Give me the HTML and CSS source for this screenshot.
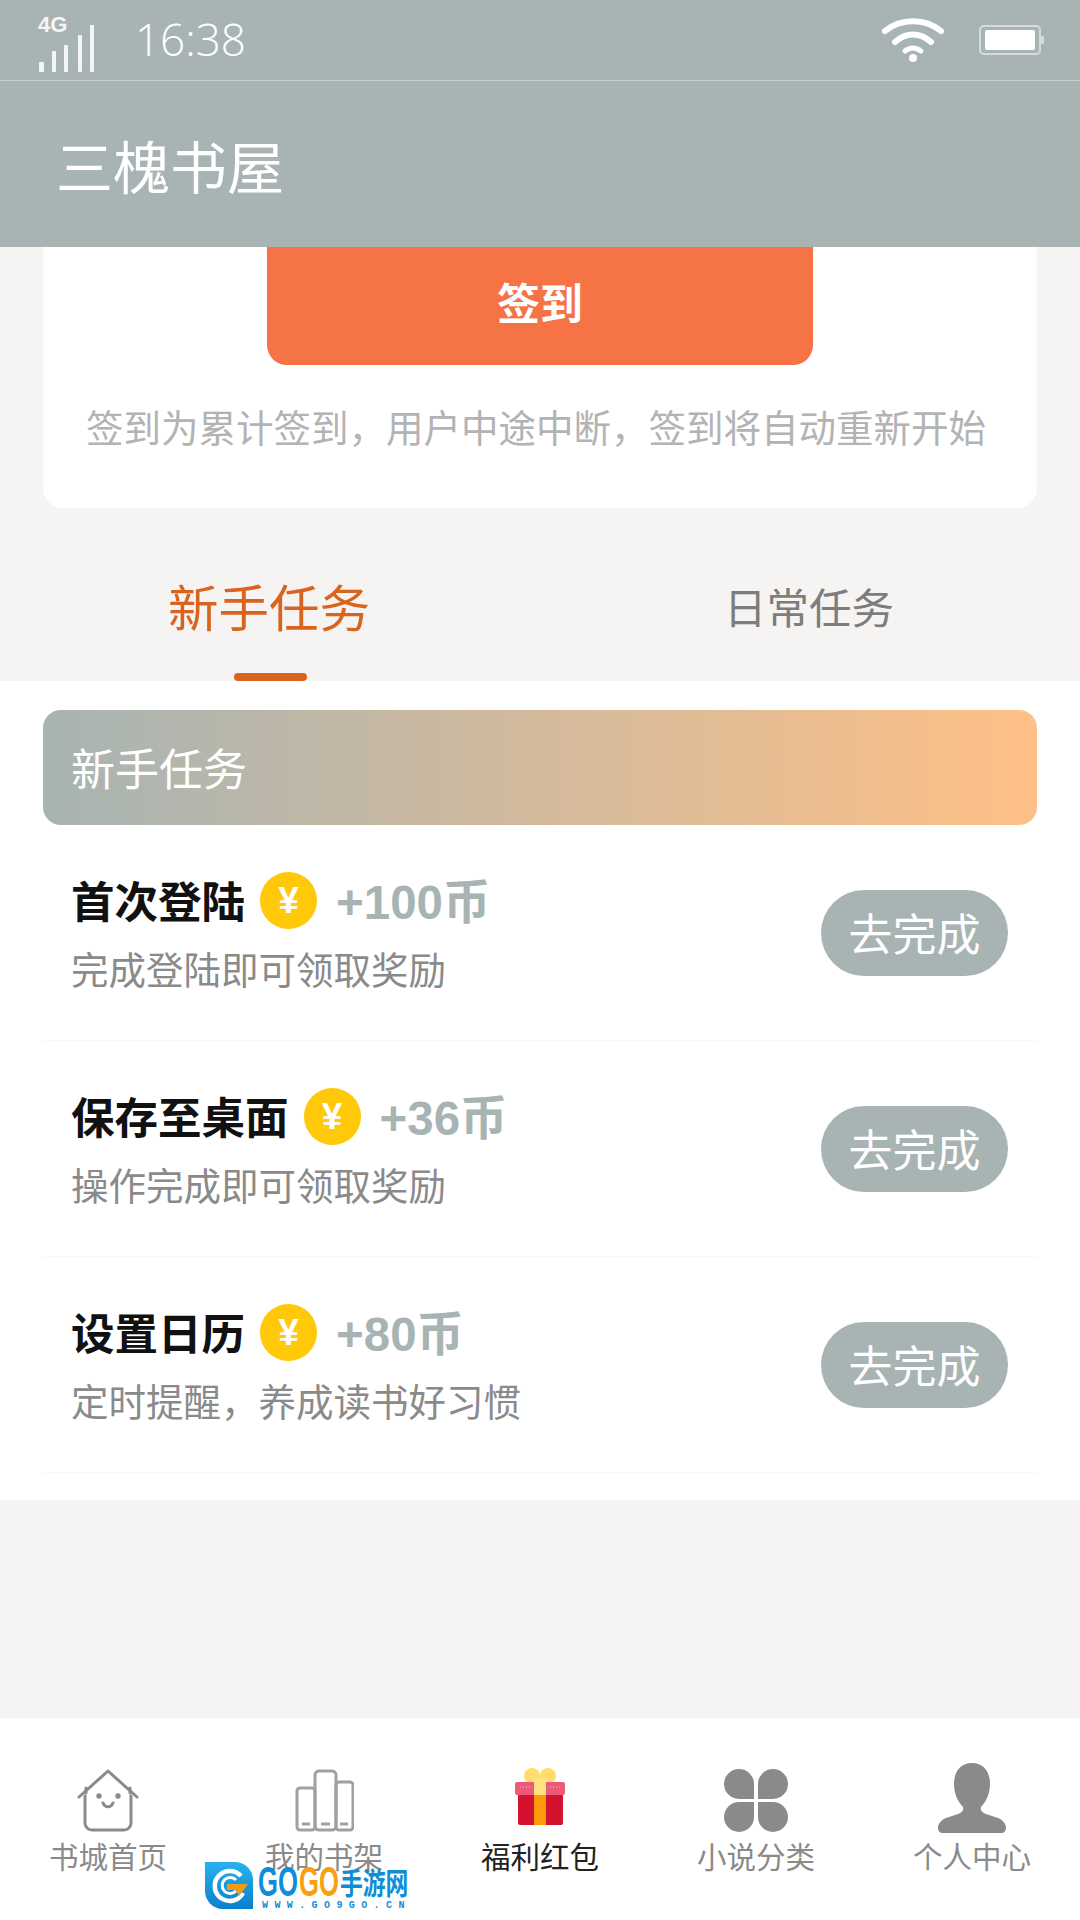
FILE: index.html
```html
<!DOCTYPE html>
<html lang="zh-CN">
<head>
  <meta charset="UTF-8">
  <title>三槐书屋</title>
  <link rel="stylesheet" href="styles.css">
</head>
<body>
  <div class="top">
    <div class="status">
      <div class="signal">
        <span class="net">4G</span>
        <svg class="bars" width="58" height="47" viewBox="0 0 58 47" fill="#f4f6f6">
          <rect x="2" y="37" width="5" height="10" rx="1"/>
          <rect x="15" y="26" width="4" height="21" rx="1"/>
          <rect x="27" y="20" width="4" height="27" rx="1"/>
          <rect x="41" y="10" width="4" height="37" rx="1"/>
          <rect x="53" y="0" width="4" height="47" rx="1"/>
        </svg>
      </div>
      <span class="time">16:38</span>
      <div class="status-right">
        <svg width="64" height="46" viewBox="0 0 64 46" fill="none" stroke="#fff" stroke-linecap="round">
          <path d="M4 14C20 1 44 1 60 14" stroke-width="6"/>
          <path d="M14 25C25 15 39 15 50 25" stroke-width="6"/>
          <path d="M24 34C29 30 35 30 40 34" stroke-width="5"/>
          <circle cx="32" cy="41" r="4" fill="#fff" stroke="none"/>
        </svg>
        <svg width="66" height="30" viewBox="0 0 66 30">
          <rect x="1" y="1" width="60" height="28" rx="4" fill="none" stroke="#d5dddc" stroke-width="2"/>
          <rect x="6" y="5" width="50" height="20" rx="2" fill="#fff"/>
          <rect x="62" y="11" width="3" height="8" rx="1" fill="#d5dddc"/>
        </svg>
      </div>
    </div>
    <div class="title">三槐书屋</div>
  </div>

  <div class="sign-card">
    <button class="sign-btn">签到</button>
    <p class="sign-note">签到为累计签到，用户中途中断，签到将自动重新开始</p>
  </div>

  <div class="tabs">
    <div class="tab active">新手任务</div>
    <div class="tab">日常任务</div>
  </div>

  <div class="panel">
    <div class="banner">新手任务</div>

    <div class="task">
      <div class="task-info">
        <div class="task-head">
          <span class="task-name">首次登陆</span>
          <span class="coin">¥</span>
          <span class="reward">+100币</span>
        </div>
        <div class="task-desc">完成登陆即可领取奖励</div>
      </div>
      <button class="go-btn">去完成</button>
    </div>

    <div class="task">
      <div class="task-info">
        <div class="task-head">
          <span class="task-name">保存至桌面</span>
          <span class="coin">¥</span>
          <span class="reward">+36币</span>
        </div>
        <div class="task-desc">操作完成即可领取奖励</div>
      </div>
      <button class="go-btn">去完成</button>
    </div>

    <div class="task">
      <div class="task-info">
        <div class="task-head">
          <span class="task-name">设置日历</span>
          <span class="coin">¥</span>
          <span class="reward">+80币</span>
        </div>
        <div class="task-desc">定时提醒，养成读书好习惯</div>
      </div>
      <button class="go-btn">去完成</button>
    </div>
  </div>

  <div class="spacer"></div>

  <div class="nav">
    <div class="nav-item">
      <svg width="64" height="66" viewBox="0 0 64 66" fill="none" stroke="#8a8a8a" stroke-width="3" stroke-linejoin="round" stroke-linecap="round">
        <path d="M3 31 32 5l29 26"/>
        <path d="M9 30v27a7 7 0 0 0 7 7h32a7 7 0 0 0 7-7V30"/>
        <path d="M10 22v5M54 22v5"/>
        <path d="M27 37c2 5 8 5 10 0"/>
        <circle cx="23" cy="30" r="1.2" fill="#8a8a8a"/>
        <circle cx="42" cy="30" r="1.2" fill="#8a8a8a"/>
      </svg>
      <span>书城首页</span>
    </div>
    <div class="nav-item">
      <svg width="60" height="66" viewBox="0 0 60 66" fill="none" stroke="#a0a0a0" stroke-width="3">
        <rect x="3" y="22" width="18" height="42" rx="3"/>
        <rect x="21" y="5" width="21" height="59" rx="4"/>
        <rect x="42" y="16" width="17" height="48" rx="3"/>
        <path d="M8 58h8M27 58h9M46 58h8"/>
      </svg>
      <span>我的书架</span>
    </div>
    <div class="nav-item current">
      <svg width="52" height="66" viewBox="0 0 52 66">
        <circle cx="18" cy="10" r="8" fill="#ffdc6e"/>
        <circle cx="34" cy="10" r="8" fill="#ffdc6e"/>
        <rect x="4" y="28" width="45" height="31" rx="2" fill="#d2122e"/>
        <rect x="1" y="16" width="50" height="13" rx="2" fill="#ec5a78"/>
        <path d="M6 21h10M36 21h10" stroke="#fff" stroke-opacity=".7" stroke-width="1" stroke-dasharray="1 2"/>
        <rect x="20" y="29" width="12" height="30" fill="#fb9a0a"/>
        <rect x="20" y="12" width="12" height="17" fill="#ffe27f"/>
      </svg>
      <span>福利红包</span>
    </div>
    <div class="nav-item">
      <svg width="64" height="66" viewBox="0 -3 64 66" fill="#8a8a8a">
        <path d="M30 30H15A15 15 0 1 1 30 15z"/>
        <path d="M34 30h15A15 15 0 1 0 34 15z"/>
        <path d="M30 33H15a15 15 0 1 0 15 15z"/>
        <path d="M34 33h15a15 15 0 1 1-15 15z"/>
      </svg>
      <span>小说分类</span>
    </div>
    <div class="nav-item">
      <svg class="person" width="68" height="70" viewBox="0 0 68 70" fill="#8a8a8a">
        <path d="M34 0c11 0 18 8 18 21 0 11-5 19-9 23-1 3 1 6 5 7l12 4c5 2 8 6 8 10 0 3-2 5-5 5H5c-3 0-5-2-5-5 0-4 3-8 8-10l12-4c4-1 6-4 5-7-4-4-9-12-9-23C16 8 23 0 34 0z"/>
      </svg>
      <span>个人中心</span>
    </div>
  </div>

  <div class="watermark">
    <svg width="48" height="47" viewBox="0 0 48 47">
      <defs>
        <linearGradient id="wmLogo" x1="0" y1="0" x2="0" y2="1">
          <stop offset="0" stop-color="#27b2ee"/>
          <stop offset="1" stop-color="#0a80cc"/>
        </linearGradient>
      </defs>
      <path d="M0 0h30c10 0 18 8 18 18v29H18C8 47 0 39 0 29z" fill="url(#wmLogo)"/>
      <path d="M36 14A15 15 0 1 0 38 31" fill="none" stroke="#fff" stroke-width="4.5"/>
      <path d="M31 18A8 8 0 1 0 31 29" fill="none" stroke="#fff" stroke-width="3"/>
      <path d="M22 22h21l-9 12-3-6h-9z" fill="#f59a13"/>
    </svg>
    <div class="wm-text">
      <div class="wm-name">
        <span class="wm-go">GO</span>
        <span class="wm-go wm-orange">GO</span>
        <span class="wm-cn">手游网</span>
      </div>
      <div class="wm-url">WWW.GO9GO.CN</div>
    </div>
  </div>
</body>
</html>
```

FILE: styles.css
```css
* {
  box-sizing: border-box;
}
body {
  margin: 0;
  width: 1080px;
  height: 1920px;
  display: flex;
  flex-direction: column;
  position: relative;
  overflow: hidden;
  background-color: #f6f4f2;
  font-family: "Noto Sans CJK SC", "Noto Sans", sans-serif;
}
button {
  font-family: inherit;
  border: none;
  padding: 0;
}

.top {
  background-color: #a7b4b3;
  color: #fff;
  height: 247px;
}
.status {
  height: 81px;
  border-bottom: 1px solid #c4cfcd;
  display: flex;
  align-items: center;
  padding: 0 35px 0 37px;
}
.signal {
  width: 98px;
  height: 58px;
  position: relative;
}
.net {
  position: absolute;
  left: 1px;
  top: 3px;
  font-family: "Liberation Sans", sans-serif;
  font-size: 22px;
  line-height: 22px;
  font-weight: bold;
  color: #f4f6f6;
}
.bars {
  position: absolute;
  left: 0;
  top: 14px;
}
.time {
  font-family: "Open Sans", sans-serif;
  font-weight: 300;
  font-size: 44px;
  line-height: 1;
  margin-bottom: 2px;
}
.status-right {
  margin-left: auto;
  display: flex;
  align-items: center;
  gap: 34px;
}
.title {
  font-size: 57px;
  line-height: 166px;
  padding-left: 56px;
}

.sign-card {
  margin: 0 43px;
  height: 261px;
  background: #fff;
  border-radius: 0 0 20px 20px;
  display: flex;
  flex-direction: column;
  align-items: center;
}
.sign-btn {
  width: 546px;
  height: 118px;
  padding-bottom: 10px;
  background: #f67345;
  color: #fff;
  font-size: 43px;
  font-weight: bold;
  border-radius: 0 0 20px 20px;
}
.sign-note {
  margin: 36px 0 0;
  padding-right: 8px;
  font-size: 37.5px;
  line-height: 50px;
  color: #b3b3b3;
  white-space: nowrap;
}

.tabs {
  height: 173px;
  display: flex;
  justify-content: space-between;
  padding: 30px 185px 0 167px;
}
.tab {
  position: relative;
  font-size: 42.5px;
  line-height: 133px;
  color: #7d7d7d;
  border: 1px solid #f4f2f0;
  height: 136px;
}
.tab.active {
  font-size: 50.5px;
  color: #d9641f;
}
.tab.active::after {
  content: "";
  position: absolute;
  left: 66px;
  bottom: -8px;
  width: 73px;
  height: 8px;
  border-radius: 4px;
  background: #d9641f;
}

.panel {
  background: #fff;
  height: 819px;
  padding: 29px 43px 0;
}
.banner {
  height: 115px;
  border-radius: 18px;
  background: linear-gradient(to right, #a7b4b3, #ffc086);
  color: #fff;
  font-size: 44px;
  line-height: 115px;
  padding-left: 28px;
}
.task {
  height: 216px;
  display: flex;
  align-items: center;
  justify-content: space-between;
  border-bottom: 1px solid #f8f8f8;
  padding: 0 29px 0 28px;
}
.task-head {
  display: flex;
  align-items: center;
  height: 60px;
}
.task-name {
  font-size: 43.5px;
  font-weight: bold;
  color: #111;
  margin-bottom: 6px;
}
.coin {
  width: 57px;
  height: 57px;
  border-radius: 50%;
  background: #ffc90a;
  color: #fff;
  font-family: "Liberation Sans", sans-serif;
  font-size: 37px;
  font-weight: bold;
  text-align: center;
  line-height: 57px;
  margin: -4px 19px 0 15px;
}
.reward {
  font-family: "Liberation Sans", "Noto Sans CJK SC", sans-serif;
  font-size: 47.5px;
  font-weight: bold;
  color: #a7b4b3;
  margin-bottom: 8px;
}
.task-desc {
  margin-top: 11px;
  font-size: 37.5px;
  line-height: 50px;
  color: #8a8a8a;
  white-space: nowrap;
}
.go-btn {
  width: 187px;
  height: 86px;
  padding-bottom: 2px;
  border-radius: 43px;
  background: #a7b4b3;
  color: #fff;
  font-size: 44px;
}

.spacer {
  flex: 1;
}
.nav {
  height: 202px;
  background: #fff;
  display: flex;
}
.nav-item {
  width: 216px;
  padding-top: 48px;
  display: flex;
  flex-direction: column;
  align-items: center;
  font-size: 29.5px;
  line-height: 40px;
  color: #8a8a8a;
  gap: 3px;
}
.nav-item svg {
  display: block;
}
.nav-item .person {
  margin-top: -3px;
  margin-bottom: -1px;
}
.nav-item.current {
  color: #222;
}

.watermark {
  position: absolute;
  left: 205px;
  top: 1862px;
  display: flex;
  gap: 5px;
}
.wm-text {
  width: 150px;
}
.wm-name {
  display: flex;
  height: 39px;
  align-items: center;
  white-space: nowrap;
}
.wm-go {
  width: 41px;
  font-family: "Liberation Sans", sans-serif;
  font-size: 42px;
  line-height: 39px;
  font-weight: bold;
  color: #0e8ed8;
  transform: scaleX(0.61);
  transform-origin: left center;
}
.wm-orange {
  color: #f9a011;
}
.wm-cn {
  font-size: 30px;
  line-height: 39px;
  font-weight: bold;
  color: #0e8ed8;
  transform: scaleX(0.76);
  transform-origin: left center;
}
.wm-url {
  padding-left: 4px;
  font-family: "Liberation Mono", monospace;
  font-size: 10px;
  line-height: 9px;
  font-weight: bold;
  letter-spacing: 6.4px;
  color: #0e8ed8;
  white-space: nowrap;
}
```
